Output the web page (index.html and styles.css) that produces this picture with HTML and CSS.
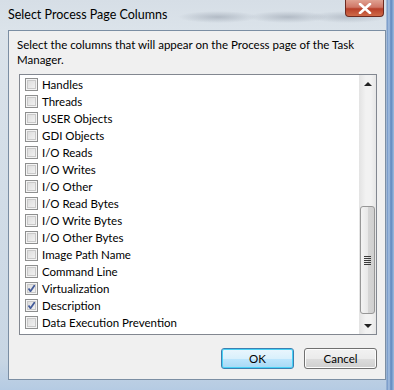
FILE: index.html
```html
<!DOCTYPE html>
<html lang="en">

<head>
    <meta charset="UTF-8">
    <title>Select Process Page Columns</title>
    <link rel="stylesheet" href="styles.css">
</head>

<body>

    <!-- Dialog window -->
    <div class="window">
        <div class="titlebar">
            <span class="title">Select Process Page Columns</span>
            <div class="close">
                <svg width="14" height="11" viewBox="0 0 14 11">
                    <path d="M2 1 L12 10 M12 1 L2 10" stroke="#fff" stroke-width="2.6" stroke-linecap="round"/>
                </svg>
            </div>
        </div>

        <div class="client">
            <p class="intro">Select the columns that will appear on the Process page of the Task Manager.</p>

            <!-- Column list -->
            <div class="listbox">
                <ul class="items">
                    <li><span class="check"></span>Handles</li>
                    <li><span class="check"></span>Threads</li>
                    <li><span class="check"></span>USER Objects</li>
                    <li><span class="check"></span>GDI Objects</li>
                    <li><span class="check"></span>I/O Reads</li>
                    <li><span class="check"></span>I/O Writes</li>
                    <li><span class="check"></span>I/O Other</li>
                    <li><span class="check"></span>I/O Read Bytes</li>
                    <li><span class="check"></span>I/O Write Bytes</li>
                    <li><span class="check"></span>I/O Other Bytes</li>
                    <li><span class="check"></span>Image Path Name</li>
                    <li><span class="check"></span>Command Line</li>
                    <li><span class="check checked"></span>Virtualization</li>
                    <li><span class="check checked"></span>Description</li>
                    <li><span class="check"></span>Data Execution Prevention</li>
                </ul>
                <div class="scrollbar">
                    <div class="arrow up"></div>
                    <div class="track">
                        <div class="thumb"><span class="grip"></span></div>
                    </div>
                    <div class="arrow down"></div>
                </div>
            </div>

            <div class="buttons">
                <button class="btn default">OK</button>
                <button class="btn">Cancel</button>
            </div>
        </div>
    </div>

</body>

</html>
```

FILE: styles.css
```css
body {
    margin: 0;
    padding: 0;
    font-family: Lato, "Open Sans", sans-serif;
    font-size: 11.5px;
    color: #000;
}

.window {
    width: 394px;
    height: 390px;
    box-sizing: border-box;
    padding: 0 8px 10px 8px;
    display: flex;
    flex-direction: column;
    background:
        linear-gradient(90deg, rgba(255,255,255,0) 0, rgba(255,255,255,0) 386px, #6f93c4 387px, #a9c3e3 389px, #5f86bd 391px, #9fbde0 394px),
        linear-gradient(180deg, #d6dee6 0, #dbe3ea 30px, #c8d6e4 360px, #b5cbe3 390px);
}

.titlebar {
    height: 30px;
    display: flex;
    align-items: flex-start;
    justify-content: space-between;
    background:
        radial-gradient(ellipse 40px 6px at 210px 17px, rgba(120,130,145,0.4), rgba(120,130,145,0)),
        radial-gradient(ellipse 40px 6px at 280px 17px, rgba(120,130,145,0.4), rgba(120,130,145,0)),
        radial-gradient(ellipse 40px 6px at 340px 17px, rgba(120,130,145,0.35), rgba(120,130,145,0));
}

.title {
    margin-top: 7px;
    font-size: 12.5px;
    color: #000;
}

.close {
    width: 39px;
    height: 17px;
    margin-right: 2px;
    box-sizing: border-box;
    border: 1px solid #6d2a20;
    border-top: none;
    border-radius: 0 0 4px 4px;
    background: linear-gradient(180deg, #e0a191 0, #cf7767 45%, #b8402a 55%, #cf6a48 100%);
    display: flex;
    align-items: center;
    justify-content: center;
}

.client {
    flex: 1;
    background: #f0f0f0;
    border: 1px solid #7b8ea3;
    padding: 6px 8px 0 8px;
    display: flex;
    flex-direction: column;
}

.intro {
    margin: 0;
    line-height: 15px;
    width: 350px;
}

.listbox {
    margin: 7px 0 0 2px;
    height: 261px;
    box-sizing: border-box;
    border: 1px solid #828790;
    background: #fff;
    display: flex;
}

.items {
    flex: 1;
    list-style: none;
    margin: 0;
    padding: 1px 0 0 5px;
}

.items li {
    height: 17px;
    display: flex;
    align-items: center;
    gap: 4px;
}

.check {
    width: 13px;
    height: 13px;
    box-sizing: border-box;
    border: 1px solid #8e8f8f;
    background: linear-gradient(135deg, #d8d8d8, #f6f6f6);
    box-shadow: inset 0 0 0 1px #f4f4f4, inset 0 0 0 2px #c9c9c9;
    flex-shrink: 0;
}

.check.checked {
    background:
        url("data:image/svg+xml;utf8,<svg xmlns='http://www.w3.org/2000/svg' width='11' height='11'><path d='M2.5 5.5 L4.5 8.3 L9 1.8' fill='none' stroke='%23445c9a' stroke-width='1.8'/></svg>") center / 11px 11px no-repeat,
        linear-gradient(135deg, #d8d8d8, #f6f6f6);
}

.scrollbar {
    width: 17px;
    display: flex;
    flex-direction: column;
    background: linear-gradient(90deg, #e3e3e3, #f2f2f2 40%, #f2f2f2 70%, #e6e6e6);
}

.arrow {
    height: 17px;
    display: flex;
    align-items: center;
    justify-content: center;
}

.arrow.up::before {
    content: "";
    border-left: 4px solid transparent;
    border-right: 4px solid transparent;
    border-bottom: 4px solid #222;
}

.arrow.down::before {
    content: "";
    border-left: 4px solid transparent;
    border-right: 4px solid transparent;
    border-top: 4px solid #222;
}

.track {
    flex: 1;
    display: flex;
    flex-direction: column;
    justify-content: flex-end;
    padding-bottom: 3px;
}

.thumb {
    height: 108px;
    margin: 0 1px;
    box-sizing: border-box;
    border: 1px solid #979797;
    border-radius: 3px;
    background: linear-gradient(90deg, #f3f3f3, #e8e8e8 50%, #d6d6d6 52%, #d0d0d0);
    display: flex;
    align-items: center;
    justify-content: center;
}

.grip {
    width: 7px;
    height: 9px;
    background: repeating-linear-gradient(180deg, #3a3a3a 0, #3a3a3a 1px, transparent 1px, transparent 2px);
}

.buttons {
    display: flex;
    justify-content: flex-end;
    gap: 10px;
    margin-top: 13px;
}

.btn {
    width: 73px;
    height: 21px;
    font-family: Lato, "Open Sans", sans-serif;
    font-size: 11.5px;
    padding: 0;
    border: 1px solid #707070;
    border-radius: 3px;
    background: linear-gradient(180deg, #f2f2f2 0, #ebebeb 50%, #dddddd 50%, #cfcfcf 100%);
    box-shadow: inset 0 0 0 1px #fcfcfc;
    color: #000;
}

.btn.default {
    border-color: #3c7fb1;
    background: linear-gradient(180deg, #eaf6fd 0, #d9f0fc 50%, #bee6fd 50%, #a7d9f5 100%);
    box-shadow: inset 0 0 0 1px #48d2f6;
}
```
